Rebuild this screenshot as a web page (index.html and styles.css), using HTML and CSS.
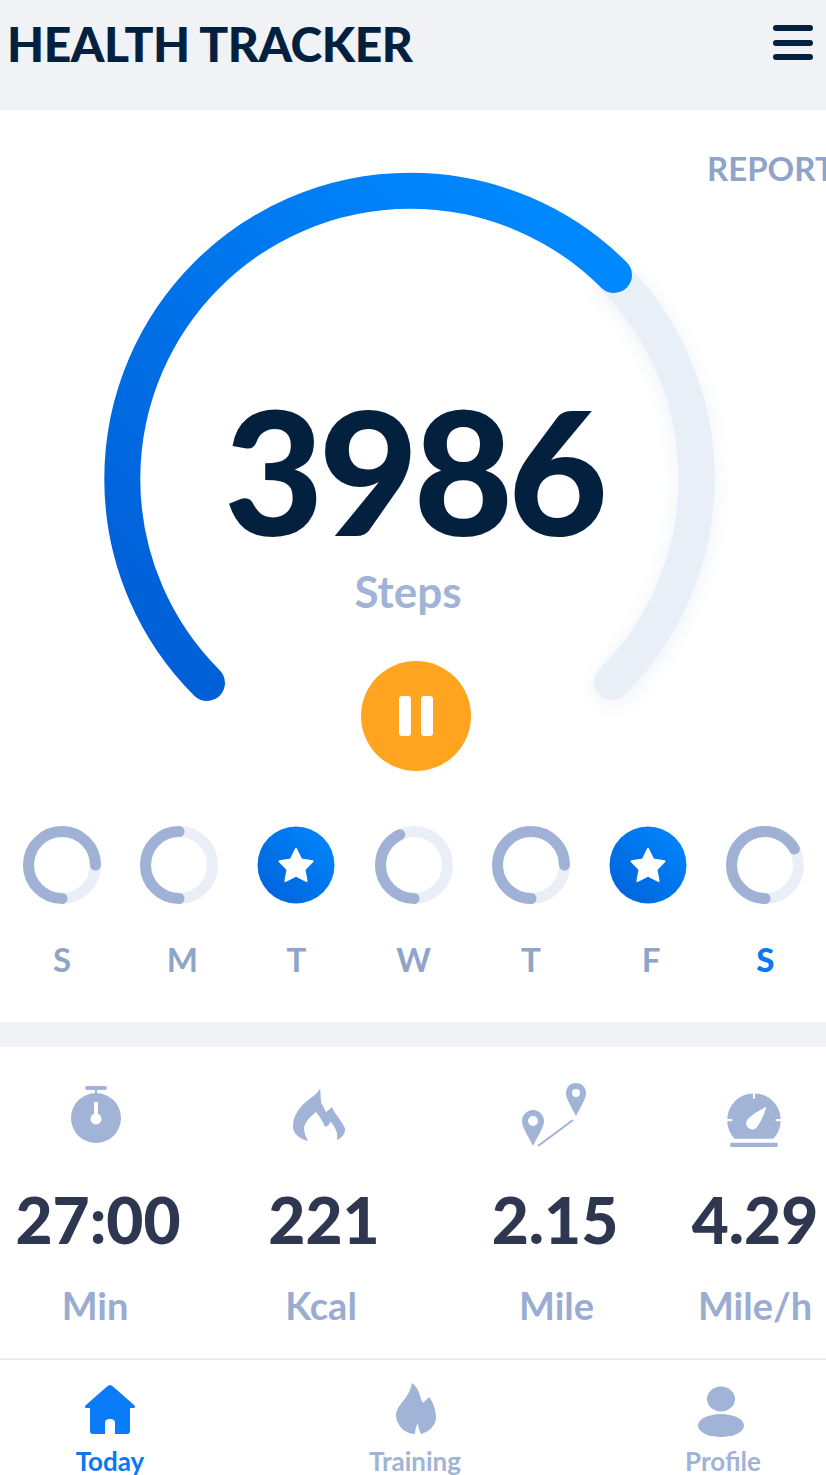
FILE: index.html
```html
<!DOCTYPE html>
<html lang="en">
<head>
<meta charset="utf-8">
<title>Health Tracker</title>
<link rel="stylesheet" href="styles.css">
</head>
<body>
<div class="app">
  <header class="topbar">
    <h1 class="title">HEALTH TRACKER</h1>
    <div class="menu"><span></span><span></span><span></span></div>
  </header>

  <section class="hero">
    <a class="report">REPORT</a>
    <div class="gauge">
      <svg class="gauge-svg" width="610" height="528" viewBox="0 0 610 528">
        <defs>
          <linearGradient id="gaugeGrad" gradientUnits="userSpaceOnUse" x1="100" y1="510" x2="510" y2="100">
            <stop offset="0" stop-color="#0060d8"/>
            <stop offset="1" stop-color="#0089ff"/>
          </linearGradient>
        </defs>
        <path class="gauge-track" d="M510 105A287 287 0 0 1 508 510"/>
        <path class="gauge-fill" d="M103 511A287 287 0 1 1 510 103"/>
      </svg>
      <div class="count">3986</div>
      <div class="count-label">Steps</div>
    </div>
    <button class="pause"><span></span><span></span></button>

    <div class="days">
      <div class="day">
        <svg class="ring" viewBox="0 0 78 78"><circle class="ring-track" cx="39" cy="39" r="33.5"/><circle class="ring-fill" cx="39" cy="39" r="33.5" pathLength="100" stroke-dasharray="75 100" transform="rotate(90 39 39)"/></svg>
        <span class="day-label">S</span>
      </div>
      <div class="day">
        <svg class="ring" viewBox="0 0 78 78"><circle class="ring-track" cx="39" cy="39" r="33.5"/><circle class="ring-fill" cx="39" cy="39" r="33.5" pathLength="100" stroke-dasharray="50 100" transform="rotate(90 39 39)"/></svg>
        <span class="day-label nudge">M</span>
      </div>
      <div class="day">
        <svg class="ring" viewBox="0 0 78 78"><defs><linearGradient id="badge1" x1="0" y1="1" x2="1" y2="0"><stop offset="0" stop-color="#0060d8"/><stop offset="1" stop-color="#0089ff"/></linearGradient></defs><circle cx="39" cy="39" r="38.5" fill="url(#badge1)"/><polygon class="star" points="39,23 44.3,33.6 55.5,35.3 47.5,43.6 49.6,55 39,49.6 28.4,55 30.5,43.6 22.5,35.3 33.7,33.6"/></svg>
        <span class="day-label">T</span>
      </div>
      <div class="day">
        <svg class="ring" viewBox="0 0 78 78"><circle class="ring-track" cx="39" cy="39" r="33.5"/><circle class="ring-fill" cx="39" cy="39" r="33.5" pathLength="100" stroke-dasharray="43 100" transform="rotate(90 39 39)"/></svg>
        <span class="day-label">W</span>
      </div>
      <div class="day">
        <svg class="ring" viewBox="0 0 78 78"><circle class="ring-track" cx="39" cy="39" r="33.5"/><circle class="ring-fill" cx="39" cy="39" r="33.5" pathLength="100" stroke-dasharray="75 100" transform="rotate(90 39 39)"/></svg>
        <span class="day-label">T</span>
      </div>
      <div class="day">
        <svg class="ring" viewBox="0 0 78 78"><defs><linearGradient id="badge2" x1="0" y1="1" x2="1" y2="0"><stop offset="0" stop-color="#0060d8"/><stop offset="1" stop-color="#0089ff"/></linearGradient></defs><circle cx="39" cy="39" r="38.5" fill="url(#badge2)"/><polygon class="star" points="39,23 44.3,33.6 55.5,35.3 47.5,43.6 49.6,55 39,49.6 28.4,55 30.5,43.6 22.5,35.3 33.7,33.6"/></svg>
        <span class="day-label nudge">F</span>
      </div>
      <div class="day">
        <svg class="ring" viewBox="0 0 78 78"><circle class="ring-track" cx="39" cy="39" r="33.5"/><circle class="ring-fill" cx="39" cy="39" r="33.5" pathLength="100" stroke-dasharray="67 100" transform="rotate(90 39 39)"/></svg>
        <span class="day-label day-active">S</span>
      </div>
    </div>
  </section>

  <div class="divider"></div>

  <section class="stats">
    <div class="stat">
      <svg class="stat-icon" viewBox="0 0 66 66">
        <rect x="20" y="3" width="22" height="4" rx="2"/><rect x="30" y="6" width="2" height="6"/>
        <path fill-rule="evenodd" d="M31 10a25 25 0 1 1 0 50a25 25 0 1 1 0-50ZM29 19V30.800a5.500 5.500 0 1 0 4 0V19Z"/>
      </svg>
      <div class="stat-value">27:00</div>
      <div class="stat-label label-left">Min</div>
    </div>
    <div class="stat">
      <svg class="stat-icon" viewBox="0 0 60 60">
        <path d="M26.400 4.500C27 10 27 15 27.500 18L31.800 26.500L37.300 21.800C39 27 46 34 49 41C50 46 46 50 41.800 52C43 47 41 41 36 35L34 38.500L31 40C29 35 26 30 22.700 26.400C17 31 11 37 12 43C12.500 47 14 50 15.500 52.700C8 51 2 46 1.800 40C1.500 30 8 22 15 16C20 12 25 9 26.400 4.500Z"/>
      </svg>
      <div class="stat-value">221</div>
      <div class="stat-label label-left">Kcal</div>
    </div>
    <div class="stat">
      <svg class="stat-icon" viewBox="0 0 66 66">
        <path fill-rule="evenodd" d="M11 27C17 27 22 32 22 38C22 45 15 54 11 63C7 54 0 45 0 38C0 32 5 27 11 27ZM11 33a5 5 0 1 0 0 10a5 5 0 1 0 0-10Z"/>
        <path fill-rule="evenodd" d="M54 0C59.500 0 64 4 64 10C64 16 58 25 54 33C50 25 44 16 44 10C44 4 48.500 0 54 0ZM54 6a4 4 0 1 0 0 8a4 4 0 1 0 0-8Z"/>
        <path class="thin-line" d="M16 63L51 37"/>
      </svg>
      <div class="stat-value">2.15</div>
      <div class="stat-label label-right">Mile</div>
    </div>
    <div class="stat stat-last">
      <svg class="stat-icon" viewBox="0 0 64 64">
        <path fill-rule="evenodd" d="M12.200 54A26 26 0 1 1 49.800 54ZM30 10V15H32V10ZM5 35V37H10V35ZM52 35V37H57V35ZM43 23C37 26 30 30 26 34A6 6 0 1 0 35 41C38 37 41 30 43 23Z"/>
        <rect x="8" y="58" width="46" height="4" rx="1"/>
      </svg>
      <div class="stat-value">4.29</div>
      <div class="stat-label">Mile/h</div>
    </div>
  </section>

  <nav class="tabs">
    <div class="tab tab-active">
      <svg class="tab-icon" viewBox="0 0 60 56">
        <path fill-rule="evenodd" d="M30 3C31 3 32 3.500 33 4.500L54 23C56 25 55 26 53 26H50V49C50 51 49 52 47 52H13C11 52 10 51 10 49V26H7C5 26 4 25 6 23L27 4.500C28 3.500 29 3 30 3ZM25 52H35V41C35 38 33 37 30 37C27 37 25 38 25 41Z"/>
      </svg>
      <span>Today</span>
    </div>
    <div class="tab">
      <svg class="tab-icon" viewBox="0 0 60 56">
        <path d="M27 1C31 4 34 9 35 14C36 17 37 19 38 21C40 19 42 17 44 15C48 20 51 28 51 36C51 43 44 50 36 52C34 48 33 44 33 41C31 44 30 48 30 52C20 52 12 44 11 34C11 27 15 23 19 18C23 13 26 7 27 1Z"/>
      </svg>
      <span>Training</span>
    </div>
    <div class="tab">
      <svg class="tab-icon" viewBox="0 0 60 56">
        <ellipse cx="30" cy="17" rx="14" ry="12.500"/><ellipse cx="30" cy="43.500" rx="23" ry="11.500"/>
      </svg>
      <span class="tab-label-right">Profile</span>
    </div>
  </nav>
</div>
</body>
</html>
```
FILE: styles.css
```css
* { box-sizing: border-box; }
html, body { margin: 0; padding: 0; }
body {
  background: #fff;
  font-family: Lato, "Open Sans", sans-serif;
  color: #03213f;
}
.app {
  width: 826px;
  height: 1475px;
  overflow: hidden;
  display: flex;
  flex-direction: column;
}
.topbar {
  height: 110px;
  background: #f0f2f5;
  display: flex;
  justify-content: space-between;
  padding: 25px 13px 0 7px;
  flex: none;
}
.title {
  margin: 0;
  font-size: 48px;
  line-height: 38px;
  font-weight: 900;
  letter-spacing: -0.45px;
  color: #03213f;
}
.menu {
  width: 40px;
  display: flex;
  flex-direction: column;
  gap: 8.500px;
}
.menu span {
  display: block;
  height: 6px;
  border-radius: 3px;
  background: #03213f;
}
.hero {
  position: relative;
  height: 912px;
  flex: none;
  padding-top: 62px;
  display: flex;
  flex-direction: column;
  align-items: flex-start;
  overflow: hidden;
}
.report {
  position: absolute;
  top: 38px;
  left: 707px;
  font-size: 33px;
  line-height: 40px;
  font-weight: 700;
  color: #8ea4c8;
  white-space: nowrap;
}
.gauge {
  position: relative;
  width: 610px;
  height: 489px;
  margin-left: 104px;
  flex: none;
}
.gauge-svg { display: block; overflow: visible; }
.gauge-track, .gauge-fill {
  fill: none;
  stroke-width: 36;
  stroke-linecap: round;
}
.gauge-track {
  stroke: #e9eff7;
  filter: drop-shadow(0 4px 10px rgba(160, 180, 215, 0.18));
}
.gauge-fill { stroke: url(#gaugeGrad); }
.count {
  position: absolute;
  top: 208px;
  left: 0;
  width: 619px;
  text-align: center;
  font-size: 172px;
  line-height: 180px;
  font-weight: 900;
  letter-spacing: -5px;
  color: #03213f;
}
.count-label {
  position: absolute;
  top: 391px;
  left: 0;
  width: 608px;
  text-align: center;
  font-size: 44px;
  line-height: 56px;
  font-weight: 700;
  color: #a1b3d6;
}
.pause {
  width: 110px;
  height: 110px;
  margin-left: 361px;
  padding: 0;
  border: 0;
  border-radius: 50%;
  background: #ffa41e;
  display: flex;
  justify-content: center;
  align-items: center;
  gap: 10px;
  flex: none;
}
.pause span {
  width: 12px;
  height: 40px;
  border-radius: 3px;
  background: #fff;
}
.days {
  margin-top: 55px;
  padding-left: 3.500px;
  display: grid;
  grid-template-columns: repeat(7, 117.200px);
}
.day {
  display: flex;
  flex-direction: column;
  align-items: center;
  gap: 35px;
}
.ring { width: 78px; height: 78px; display: block; }
.ring-track, .ring-fill { fill: none; stroke-width: 11; }
.ring-track { stroke: #e9eef7; }
.ring-fill { stroke: #9fb1d5; stroke-linecap: round; }
.star { fill: #fff; stroke: #fff; stroke-width: 2; stroke-linejoin: round; }
.day-label {
  font-size: 33px;
  line-height: 40px;
  font-weight: 700;
  color: #8ea4c8;
}
.nudge { padding-left: 6px; }
.day-active { font-weight: 900; color: #0a78ee; }
.divider {
  height: 25px;
  flex: none;
  background: #f0f2f5;
}
.stats {
  height: 313px;
  flex: none;
  padding-top: 36px;
  display: grid;
  grid-template-columns: 196px 256px 206px 168px;
  align-items: start;
  border-bottom: 2px solid #e8ecf3;
}
.stat {
  display: flex;
  flex-direction: column;
  align-items: center;
}
.stat-last { padding-left: 26px; }
.stat-icon {
  width: 66px;
  height: 66px;
  fill: #a1b3d6;
}
.thin-line { fill: none; stroke: #a1b3d6; stroke-width: 2; }
.stat-value {
  margin-top: 33px;
  font-size: 64px;
  line-height: 76px;
  font-weight: 900;
  color: #2f3650;
  white-space: nowrap;
}
.stat-label {
  margin-top: 23px;
  font-size: 38px;
  line-height: 48px;
  font-weight: 700;
  color: #9aadd1;
  white-space: nowrap;
}
.label-left { padding-right: 6px; }
.label-right { padding-left: 3px; }
.tabs {
  flex: none;
  display: grid;
  grid-template-columns: 220px 390px 222px;
  padding-top: 22px;
}
.tab {
  display: flex;
  flex-direction: column;
  align-items: center;
  font-size: 26px;
  line-height: 34px;
  font-weight: 700;
  color: #a1b3d6;
}
.tab-label-right { padding-left: 4px; }
.tab-icon {
  width: 60px;
  height: 56px;
  fill: #a1b3d6;
  margin-bottom: 6px;
}
.tab-active { color: #0a78ee; }
.tab-active .tab-icon { fill: #0a7cfa; }
```
